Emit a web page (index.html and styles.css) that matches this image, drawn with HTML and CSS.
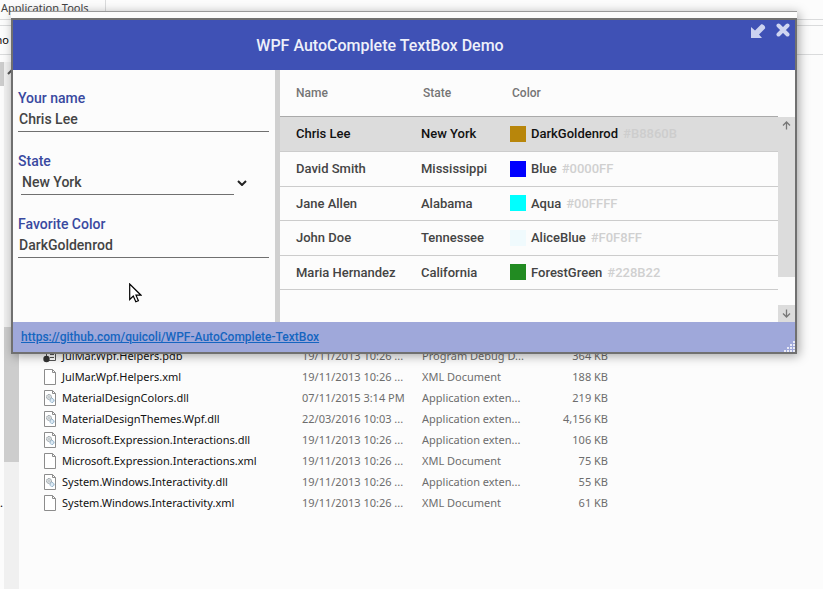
FILE: index.html
```html
<!DOCTYPE html>
<html lang="en">
<head>
<meta charset="utf-8">
<title>WPF AutoComplete TextBox Demo</title>
<link rel="stylesheet" href="styles.css">
</head>
<body>
<svg class="defs" aria-hidden="true">
  <symbol id="file-page" viewBox="0 0 14 18">
    <path d="M1.500 1.500h8l3 3v12h-11z" fill="#fff" stroke="#8c8c8c"/>
    <path d="M9.500 1.500v3h3" fill="none" stroke="#8c8c8c"/>
  </symbol>
  <symbol id="file-dll" viewBox="0 0 14 18">
    <path d="M1.500 1.500h8l3 3v12h-11z" fill="#fff" stroke="#8c8c8c"/>
    <path d="M9.500 1.500v3h3" fill="none" stroke="#8c8c8c"/>
    <circle cx="6" cy="8" r="2.500" fill="#e4e8ea" stroke="#838d93" stroke-dasharray="1.200 .5"/>
    <circle cx="6" cy="8" r="1" fill="#fff" stroke="#9aa3a8" stroke-width=".6"/>
    <circle cx="9" cy="11.500" r="2" fill="#dceaf5" stroke="#7ba0bd" stroke-dasharray="1.200 .5"/>
  </symbol>
  <symbol id="file-pdb" viewBox="0 0 14 18">
    <path d="M3.500 1.500h9v12h-9z" fill="#fff" stroke="#555"/>
    <path d="M7 10.500h4M7 7.500h4" stroke="#555"/>
    <circle cx="3.500" cy="12" r="3.200" fill="#333"/>
  </symbol>
</svg>

<main class="explorer">
  <div class="ribbon"><span class="ribbon-tab">Application Tools</span></div>
  <div class="address"><span class="crumb">no</span></div>
  <div class="explorer-body">
    <div class="tree"><span class="tree-selected"></span><span class="tree-text">.</span></div>
    <div class="tree-scroll">
      <svg class="tree-up" viewBox="0 0 9 6"><path d="M1 5l3.500-3.500L8 5" fill="none" stroke="#555" stroke-width="2"/></svg>
      <span class="tree-thumb"></span>
    </div>
    <table class="files">
      <tbody>
        <tr><td><svg class="file-icon"><use href="#file-pdb"/></svg></td><td>JulMar.Wpf.Helpers.pdb</td><td>19/11/2013 10:26 ...</td><td>Program Debug D...</td><td>364 KB</td></tr>
        <tr><td><svg class="file-icon"><use href="#file-page"/></svg></td><td>JulMar.Wpf.Helpers.xml</td><td>19/11/2013 10:26 ...</td><td>XML Document</td><td>188 KB</td></tr>
        <tr><td><svg class="file-icon"><use href="#file-dll"/></svg></td><td>MaterialDesignColors.dll</td><td>07/11/2015 3:14 PM</td><td>Application exten...</td><td>219 KB</td></tr>
        <tr><td><svg class="file-icon"><use href="#file-dll"/></svg></td><td>MaterialDesignThemes.Wpf.dll</td><td>22/03/2016 10:03 ...</td><td>Application exten...</td><td>4,156 KB</td></tr>
        <tr><td><svg class="file-icon"><use href="#file-dll"/></svg></td><td>Microsoft.Expression.Interactions.dll</td><td>19/11/2013 10:26 ...</td><td>Application exten...</td><td>106 KB</td></tr>
        <tr><td><svg class="file-icon"><use href="#file-page"/></svg></td><td>Microsoft.Expression.Interactions.xml</td><td>19/11/2013 10:26 ...</td><td>XML Document</td><td>75 KB</td></tr>
        <tr><td><svg class="file-icon"><use href="#file-dll"/></svg></td><td>System.Windows.Interactivity.dll</td><td>19/11/2013 10:26 ...</td><td>Application exten...</td><td>55 KB</td></tr>
        <tr><td><svg class="file-icon"><use href="#file-page"/></svg></td><td>System.Windows.Interactivity.xml</td><td>19/11/2013 10:26 ...</td><td>XML Document</td><td>61 KB</td></tr>
      </tbody>
    </table>
  </div>
</main>

<section class="window">
  <div class="app">
    <header class="titlebar">
      <h1>WPF AutoComplete TextBox Demo</h1>
      <div class="window-buttons">
        <button type="button" aria-label="Restore"><svg width="16" height="16" viewBox="0 0 16 16"><path d="M1 4v11h11l-3-3.500 6-6c1-1.500-2-5-4-4l-6 6z" fill="#ccd2f0"/></svg></button>
        <button type="button" aria-label="Close"><svg width="14" height="14" viewBox="0 0 14 14"><path d="M2.500 2.500l9 9M11.500 2.500l-9 9" stroke="#d0d5f1" stroke-width="4" stroke-linecap="round"/></svg></button>
      </div>
    </header>
    <div class="content">
      <form class="form">
        <div class="field">
          <label for="name">Your name</label>
          <input id="name" type="text" value="Chris Lee">
        </div>
        <div class="field">
          <label for="state">State</label>
          <div class="select">
            <select id="state"><option>New York</option><option>Mississippi</option><option>Alabama</option><option>Tennessee</option><option>California</option></select>
            <svg width="10" height="6" viewBox="0 0 10 6"><path d="M1 1l4 4 4-4" fill="none" stroke="#222" stroke-width="2"/></svg>
          </div>
        </div>
        <div class="field">
          <label for="color">Favorite Color</label>
          <input id="color" type="text" value="DarkGoldenrod">
        </div>
      </form>
      <div class="splitter"></div>
      <div class="grid">
        <table class="people">
          <thead><tr><th>Name</th><th>State</th><th>Color</th></tr></thead>
          <tbody>
            <tr class="selected"><td>Chris Lee</td><td>New York</td><td><div class="color"><i class="swatch goldenrod"></i>DarkGoldenrod<span>#B8860B</span></div></td></tr>
            <tr><td>David Smith</td><td>Mississippi</td><td><div class="color"><i class="swatch blue"></i>Blue<span>#0000FF</span></div></td></tr>
            <tr><td>Jane Allen</td><td>Alabama</td><td><div class="color"><i class="swatch aqua"></i>Aqua<span>#00FFFF</span></div></td></tr>
            <tr><td>John Doe</td><td>Tennessee</td><td><div class="color"><i class="swatch alice"></i>AliceBlue<span>#F0F8FF</span></div></td></tr>
            <tr><td>Maria Hernandez</td><td>California</td><td><div class="color"><i class="swatch forest"></i>ForestGreen<span>#228B22</span></div></td></tr>
          </tbody>
        </table>
        <div class="scrollbar">
          <button type="button" aria-label="Scroll up"><svg width="9" height="9" viewBox="0 0 9 9"><path d="M4.500 8.500V1.500M1 4.500l3.500-3.500L8 4.500" fill="none" stroke="#777" stroke-width="1.300"/></svg></button>
          <div class="thumb"></div>
          <button type="button" aria-label="Scroll down"><svg width="9" height="9" viewBox="0 0 9 9"><path d="M4.500.5v7M1 4.500L4.500 8 8 4.500" fill="none" stroke="#777" stroke-width="1.300"/></svg></button>
        </div>
      </div>
    </div>
    <footer class="statusbar">
      <a href="https://github.com/quicoli/WPF-AutoComplete-TextBox">https://github.com/quicoli/WPF-AutoComplete-TextBox</a>
      <svg width="11" height="11" viewBox="0 0 11 11"><path d="M9 0h2v2H9zM6 3h2v2H6zM9 3h2v2H9zM3 6h2v2H3zM6 6h2v2H6zM9 6h2v2H9zM0 9h2v2H0zM3 9h2v2H3zM6 9h2v2H6zM9 9h2v2H9z" fill="#e9ebf7"/></svg>
    </footer>
  </div>
</section>

<svg class="pointer" width="13" height="20" viewBox="0 0 13 20"><path d="M.7 1v15.500l3.600-3.400 2.500 5.700 2.600-1.100-2.400-5.500h5z" fill="#fff" stroke="#000" stroke-width="1.200"/></svg>
</body>
</html>
```

FILE: styles.css
```css
* { box-sizing: border-box; }

body {
  margin: 0;
  background: #fcfcfc;
  font-family: Roboto, sans-serif;
  overflow: hidden;
}

.defs { display: none; }

button { padding: 0; border: 0; background: none; }

table { border-collapse: collapse; table-layout: fixed; }

/* File explorer behind the window */
.explorer {
  display: flex;
  flex-direction: column;
  min-height: 100vh;
  font: 11px/16px "Noto Sans", sans-serif;
}

.ribbon {
  height: 20px;
  border-bottom: 1px solid #dadbdc;
}

.ribbon-tab {
  display: block;
  width: 106px;
  height: 19px;
  padding-left: 1px;
  border-right: 1px solid #dadbdc;
  color: #444;
}

.address {
  display: flex;
  align-items: center;
  height: 30px;
  margin-top: 5px;
  border: solid #dadbdc;
  border-width: 1px 0;
}

.crumb {
  display: flex;
  justify-content: flex-end;
  width: 9px;
  overflow: hidden;
}

.explorer-body { display: flex; flex: 1; padding-top: 7px; }

.tree {
  display: flex;
  flex-direction: column;
  justify-content: space-between;
  width: 4px;
  padding-bottom: 78px;
  overflow: hidden;
}

.tree-selected { height: 24px; background: #ccc; }

.tree-scroll {
  width: 15px;
  background: #f0f0f0;
}

.tree-up { display: block; width: 9px; height: 6px; margin: 7px 3px; }

.tree-thumb {
  display: block;
  height: 135px;
  margin-top: 252px;
  background: #cdcdcd;
}

.files {
  align-self: flex-start;
  width: 589px;
  margin-top: 283px;
}

.files td { height: 21px; padding: 0; white-space: nowrap; color: #6d6d6d; }
.files td:nth-child(1) { width: 43px; padding-left: 24px; }
.files td:nth-child(2) { width: 240px; color: #111; }
.files td:nth-child(3) { width: 120px; }
.files td:nth-child(4) { width: 120px; }
.files td:nth-child(5) { text-align: right; }

.file-icon { display: block; width: 14px; height: 18px; }

/* Demo window */
.window {
  position: absolute;
  top: 11px;
  left: 11px;
  right: 26px;
  padding-top: 6px;
  border-top: 1px solid #999;
  background: #fcfcfc;
  box-shadow: 2px 2px 10px rgba(0, 0, 0, .35);
}

.app { border: 2px solid #707070; }

.titlebar {
  display: flex;
  height: 50px;
  background: #3f51b5;
}

.titlebar h1 {
  flex: 1;
  margin: 0;
  text-align: center;
  font-size: 16px;
  line-height: 52px;
  font-weight: 500;
  color: #eef0fa;
}

.window-buttons {
  display: flex;
  align-items: flex-start;
  gap: 10px;
  padding: 3px 5px 0 3px;
}

.window-buttons svg { display: block; }

.content { display: flex; }

.form {
  display: flex;
  flex-direction: column;
  gap: 20px;
  width: 262px;
  padding: 19px 6px 0 5px;
}

.field { display: flex; flex-direction: column; }

.field label {
  font-size: 14px;
  line-height: 18px;
  font-weight: 500;
  color: #3949a0;
}

.field input,
.field select {
  height: 25px;
  padding: 0 1px;
  border: 0;
  border-bottom: 1px solid #707070;
  border-radius: 0;
  outline: 0;
  background: transparent;
  font: 500 14px/24px Roboto, sans-serif;
  color: #444;
}

.field select { flex: 1; appearance: none; }

.select {
  display: flex;
  align-items: center;
  gap: 3px;
  padding: 0 22px 0 3px;
}

.splitter { width: 5px; background: #d0d0d0; }

.grid { display: flex; flex: 1; }

.people { flex: 1; align-self: flex-start; margin-bottom: 32px; }

.people th {
  height: 46px;
  padding: 0 0 0 16px;
  border-bottom: 1px solid #aaa;
  text-align: left;
  font-size: 12px;
  font-weight: 500;
  color: #757575;
}

.people th:nth-child(1) { width: 125px; }
.people th:nth-child(2) { width: 89px; }
.people th:nth-child(n+2) { padding-left: 18px; }

.people td {
  height: 35px;
  padding: 0 0 0 16px;
  border-bottom: 1px solid #ccc;
  font-size: 13px;
  font-weight: 500;
  color: #444;
  white-space: nowrap;
}

.people tr:nth-child(2n+3) td { height: 34px; }
.people .selected td { background: #dcdcdc; color: #111; }

.color { display: flex; align-items: center; }
.color span { margin-left: 5px; color: #d0d0d0; }
.selected .color span { color: #cdcdcd; }

.swatch { width: 16px; height: 16px; margin-right: 5px; }
.goldenrod { background: #b8860b; }
.blue { background: #00f; }
.aqua { background: #0ff; }
.alice { background: #f0fafd; }
.forest { background: #228b22; }

.scrollbar {
  display: flex;
  flex-direction: column;
  width: 17px;
  margin-top: 47px;
}

.scrollbar button {
  display: flex;
  align-items: center;
  justify-content: center;
  height: 17px;
  background: #dcdcdc;
}

.thumb { flex: 1; margin-bottom: 28px; background: #dcdcdc; }

.statusbar {
  display: flex;
  align-items: center;
  justify-content: space-between;
  height: 30px;
  padding-left: 8px;
  background: #9fa8da;
}

.statusbar a { font-size: 12px; font-weight: 500; color: #1565c0; }
.statusbar svg { align-self: flex-end; }

.pointer { position: absolute; top: 283px; left: 129px; }
```
